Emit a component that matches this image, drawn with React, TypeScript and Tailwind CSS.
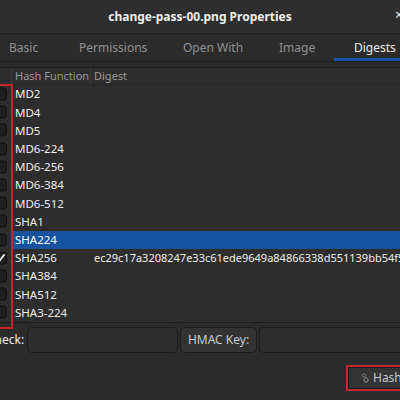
import React from "react";

const rows = [
  "MD2", "MD4", "MD5", "MD6-224", "MD6-256", "MD6-384", "MD6-512",
  "SHA1", "SHA224", "SHA256", "SHA384", "SHA512", "SHA3-224",
];

function Check({ checked }: { checked?: boolean }) {
  return (
    <div className="absolute left-[-6px] top-1/2 -translate-y-1/2 w-[13px] h-[13px] rounded-[3px] border border-[#111111] bg-[#1f1f1f] flex items-center justify-end pr-[1px]">
      {checked && (
        <svg width="9" height="9" viewBox="0 0 10 10">
          <path d="M1.5 5.5 L4 8 L9 1.5" fill="none" stroke="#f0f0f0" strokeWidth="2" strokeLinecap="round" strokeLinejoin="round" />
        </svg>
      )}
    </div>
  );
}

export default function App() {
  return (
    <div className="w-[400px] h-[400px] overflow-hidden bg-[#2b2b2b] text-[#eeeeec] relative" style={{ fontFamily: "'Noto Sans', sans-serif" }}>
      {/* Header bar */}
      <div className="h-[34px] bg-[#2e2e2e] border-b border-[#1d1d1d] flex items-center justify-center relative">
        <span className="text-[12px] font-bold text-[#eeeeec]">change-pass-00.png Properties</span>
        <span className="absolute right-[-3px] top-[8px] text-[14px] text-[#eeeeec] leading-none">×</span>
      </div>
      {/* Tabs */}
      <div className="h-[28px] flex items-stretch bg-[#2b2b2b] border-b border-[#1d1d1d] text-[12px] text-[#929292]">
        <div className="w-[79px] pl-[9px] flex items-center">Basic</div>
        <div className="w-[104px] flex items-center">Permissions</div>
        <div className="w-[96px] flex items-center">Open With</div>
        <div className="w-[55px] flex items-center">Image</div>
        <div className="flex-1 pl-[20px] flex items-center text-[#eeeeec] border-b-[3px] border-[#15539e] pt-[3px]">Digests</div>
      </div>
      <div className="h-[5px]" />
      {/* Tree */}
      <div className="border-t border-[#1d1d1d] bg-[#2d2d2d] h-[256px] border-b overflow-hidden">
        <div className="h-[17px] flex text-[11px] text-[#9a9a9a] items-center border-b border-[#262626] whitespace-nowrap">
          <div className="w-[12px] h-full border-r border-[#3a3a3a] shrink-0" />
          <div className="w-[79px] h-full border-r border-[#3a3a3a] pl-[3px] flex items-center shrink-0 overflow-hidden">Hash Function</div>
          <div className="pl-[3px]">Digest</div>
        </div>
        {rows.map((r) => {
          const sel = r === "SHA224";
          return (
            <div key={r} className="h-[18.2px] flex text-[11.5px]">
              <div className="w-[12px] relative shrink-0">
                <Check checked={r === "SHA256"} />
              </div>
              <div className={`flex-1 flex items-center min-w-0 ${sel ? "bg-[#15539e] text-white" : ""}`}>
                <div className="w-[79px] pl-[3px] shrink-0">{r}</div>
                {r === "SHA256" && (
                  <div className="whitespace-nowrap text-[11px] pl-[3px]">ec29c17a3208247e33c61ede9649a84866338d551139bb54f557a1e3d4c9f8b2</div>
                )}
              </div>
            </div>
          );
        })}
      </div>
      {/* Red annotation around checkbox column */}
      <div className="absolute left-[-4px] top-[84px] w-[17px] h-[245px] border-2 border-[#c4262e] pointer-events-none" />
      {/* Check row */}
      <div className="flex items-center h-[26px] mt-[4px] text-[12px]">
        <div className="w-[40px] shrink-0 text-[#eeeeec] ml-[-13px] whitespace-nowrap">Check:</div>
        <div className="w-[151px] shrink-0 h-[26px] rounded-[5px] bg-[#2d2d2d] border border-[#1c1c1c]" />
        <div className="w-[77px] shrink-0 h-[26px] ml-[2px] rounded-[5px] bg-[#333333] border border-[#1c1c1c] flex items-center justify-center text-[#c6ccd2]">HMAC Key:</div>
        <div className="flex-1 h-[26px] ml-[2px] rounded-l-[5px] bg-[#2d2d2d] border border-[#1c1c1c] border-r-0" />
      </div>
      {/* Hash button */}
      <div className="flex mt-[12px] pl-[346px]">
        <div className="border-2 border-[#c4262e] h-[26px] w-[60px] shrink-0 flex items-stretch">
          <div className="flex-1 bg-[#333333] border border-[#1c1c1c] flex items-center pl-[12px] gap-[4px] text-[12px] text-[#c9c9c9]">
            <svg width="8" height="10" viewBox="0 0 8 10">
              <circle cx="3" cy="2.5" r="1.6" fill="none" stroke="#7a7a7a" strokeWidth="1" />
              <circle cx="5" cy="7" r="2" fill="none" stroke="#7a7a7a" strokeWidth="1.2" />
              <path d="M5 4 V5 M5 9 V10 M2 7 H3 M7 7 H8" stroke="#7a7a7a" strokeWidth="1" />
            </svg>
            <span>Hash</span>
          </div>
        </div>
      </div>
    </div>
  );
}
